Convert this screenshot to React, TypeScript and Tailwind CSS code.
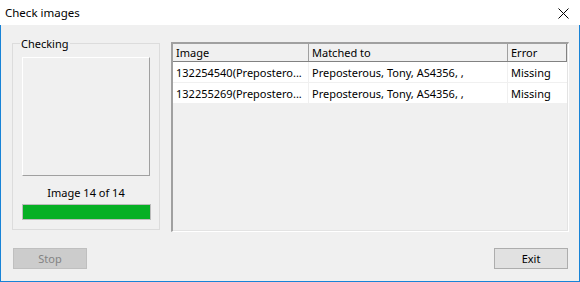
const rows = [
  { image: "132254540(Prepostero...", matched: "Preposterous, Tony, AS4356, ,", error: "Missing" },
  { image: "132255269(Prepostero...", matched: "Preposterous, Tony, AS4356, ,", error: "Missing" },
];

export default function App() {
  return (
    <div className="w-[580px] h-[282px] flex flex-col bg-white text-[11px] text-black font-['Noto_Sans',sans-serif] leading-none">
      {/* title bar */}
      <div className="h-[25px] flex items-center justify-between pl-[5px] pr-[11px] bg-white">
        <span className="text-[11.5px]">Check images</span>
        <svg width="11" height="11" viewBox="0 0 11 11" className="mt-[2px]">
          <path d="M0.5 0.5 L10.5 10.5 M10.5 0.5 L0.5 10.5" stroke="#000" strokeWidth="1" />
        </svg>
      </div>

      {/* client area */}
      <div className="flex-1 flex flex-col bg-[#f0f0f0] border-x border-b border-[#1883d7] pl-[11px] pr-[10px]">
        <div className="flex mt-[17px]">
          {/* group box */}
          <div className="relative mt-[1px] w-[149px] h-[187px] border border-[#dcdcdc]">
            <span className="absolute left-[7px] -top-[7px] px-[1px] bg-[#f0f0f0] leading-[13px]">Checking</span>
            <div className="flex flex-col items-center mt-[13px]">
              <div className="w-[128px] h-[119px] border-t border-l border-white border-b border-r border-b-[#a0a0a0] border-r-[#a0a0a0]" />
              <div className="mt-[10px] h-[12px] flex items-center">Image 14 of 14</div>
              <div className="mt-[6px] w-[129px] h-[16px] border border-[#bcbcbc] bg-[#06b025]" />
            </div>
          </div>

          {/* list view */}
          <div className="ml-[11px] w-[398px] h-[190px] border-t-2 border-l-2 border-t-[#a0a0a0] border-l-[#a0a0a0] border-b border-r border-b-white border-r-white">
            <div className="w-full h-full bg-[#f0f0f0] border-b border-r border-[#e3e3e3] border-t-0 border-l-0">
              <div className="flex h-[18px] bg-[#f0f0f0] border-b border-[#828282]">
                <div className="w-[136px] border-r border-[#a0a0a0] flex items-center pl-[3px]">Image</div>
                <div className="w-[199px] border-r border-[#a0a0a0] flex items-center pl-[3px]">Matched to</div>
                <div className="w-[59px] border-r border-[#828282] flex items-center pl-[3px]">Error</div>
              </div>
              {rows.map((r, i) => (
                <div key={i} className="flex w-[394px] h-[21px] bg-white border-b border-[#f0f0f0]">
                  <div className="w-[136px] border-r border-[#f0f0f0] flex items-center pl-[3px] whitespace-nowrap">{r.image}</div>
                  <div className="w-[199px] border-r border-[#f0f0f0] flex items-center pl-[3px] whitespace-nowrap">{r.matched}</div>
                  <div className="w-[59px] flex items-center pl-[3px]">{r.error}</div>
                </div>
              ))}
            </div>
          </div>
        </div>

        {/* buttons */}
        <div className="flex justify-between mt-[16px] pl-[1px] pr-[1px]">
          <button className="w-[74px] h-[21px] bg-[#cccccc] border border-[#bfbfbf] text-[#838383] flex items-center justify-center">Stop</button>
          <button className="w-[74px] h-[21px] bg-[#e1e1e1] border border-[#adadad] flex items-center justify-center">Exit</button>
        </div>
      </div>
    </div>
  );
}
